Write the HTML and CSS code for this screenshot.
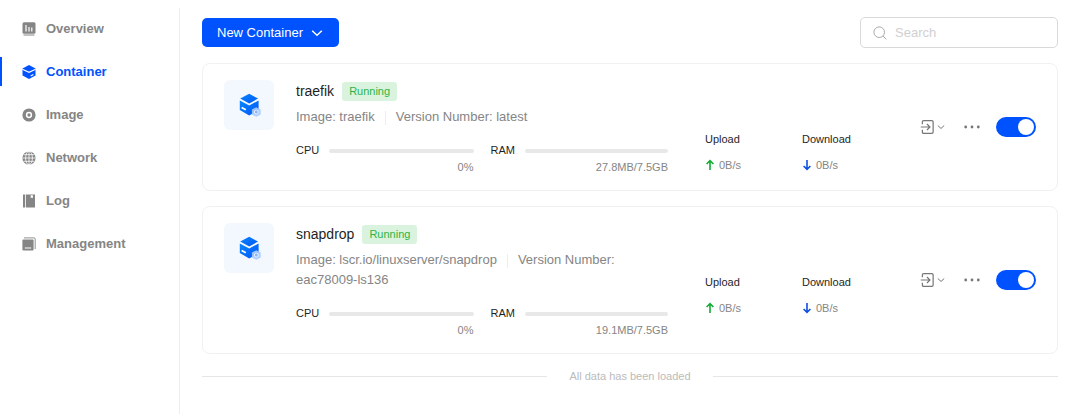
FILE: index.html
```html
<!DOCTYPE html>
<html lang="en">
<head>
<meta charset="utf-8">
<meta name="viewport" content="width=device-width, initial-scale=1">
<title>Containers</title>
<link rel="stylesheet" href="styles.css">
</head>
<body>
<svg class="defs" aria-hidden="true">
  <defs>
    <linearGradient id="boxFill" x1="0" y1="0" x2="1" y2="1"><stop offset="0" stop-color="#0a86ff"/><stop offset="1" stop-color="#0056f5"/></linearGradient>
    <symbol id="box" viewBox="-2 0 24 24">
      <path fill="url(#boxFill)" d="M10.2.8 19 5.6 10.2 10.6 1.2 5.6z"/>
      <path fill="url(#boxFill)" d="M.8 7.4 10.2 12.6 19.6 7.4V17l-9.4 5.4L.8 17z"/>
      <path stroke="#fff" stroke-width="1.7" d="m2.6 14.4 4.2 2.3"/>
      <path fill="#a9caff" fill-opacity=".9" d="m17.3 14.2 4.4 2.4v4.8l-4.4 2.4-4.4-2.4v-4.8z"/>
      <circle cx="17.3" cy="19" r="2" fill="#8bb6ff" stroke="#e8f1ff"/>
    </symbol>
    <symbol id="enter" viewBox="0 0 16 16">
      <path fill="none" stroke="#777" stroke-width="1.3" d="M2.5 5V2.6Q2.5 1.2 3.9 1.2h8.7Q14 1.2 14 2.6v10.8q0 1.4-1.4 1.4H3.9q-1.4 0-1.4-1.4V11M.8 8h9.6M7.4 4.8 10.6 8l-3.2 3.2"/>
    </symbol>
    <symbol id="chevron" viewBox="0 0 12 12">
      <path fill="none" stroke="currentColor" stroke-width="1.5" d="m1.2 3.8 4.8 4.4 4.8-4.4"/>
    </symbol>
    <symbol id="arrow" viewBox="0 0 10 12">
      <path fill="none" stroke="currentColor" stroke-width="1.6" d="M5 11V1.8M1.6 5 5 1.6 8.4 5"/>
    </symbol>
  </defs>
</svg>
<div class="app">
  <nav class="sidebar" aria-label="Main">
    <a class="nav-item" href="#overview"><svg class="nav-icon" viewBox="0 0 14 14"><rect x=".5" y=".2" width="13" height="11.6" rx="1.5" fill="currentColor"/><path stroke="#fff" stroke-width="1.2" d="M4 3v6.5M7 5v4.5M9.8 5.5v4"/><path stroke="currentColor" stroke-width="1" d="M1.5 13h11"/></svg>Overview</a>
    <a class="nav-item active" href="#container" aria-current="page"><svg class="nav-icon" viewBox="0 0 14 14"><path fill="currentColor" d="M7 0 13.5 3.5v7L7 14 .5 10.5v-7z"/><path fill="none" stroke="#fff" stroke-width="1.1" d="M.4 4.2 7 7.3l6.6-3.1M8.7 11l2.7-1.5"/></svg>Container</a>
    <a class="nav-item" href="#image"><svg class="nav-icon" viewBox="0 0 14 14"><circle cx="7" cy="7" r="6.6" fill="currentColor"/><circle cx="7" cy="7" r="2.4" fill="none" stroke="#fff" stroke-width="1.5"/></svg>Image</a>
    <a class="nav-item" href="#network"><svg class="nav-icon" viewBox="0 0 14 14"><circle cx="7" cy="7" r="6.6" fill="currentColor"/><path fill="none" stroke="#fff" stroke-width=".8" d="M7 0v14M.4 7h13.2M1.5 3.7h11M1.5 10.3h11"/><ellipse cx="7" cy="7" rx="3.4" ry="6.8" fill="none" stroke="#fff" stroke-width=".8"/></svg>Network</a>
    <a class="nav-item" href="#log"><svg class="nav-icon" viewBox="0 0 14 14"><path fill="currentColor" d="M1 .4h2v13.2H1zM3.8.4H13v13.2H3.8z"/><path fill="#fff" d="M8.7 1.2h2.2v3l-1.1-.8-1.1.8z"/></svg>Log</a>
    <a class="nav-item" href="#management"><svg class="nav-icon" viewBox="0 0 14 14"><rect x=".4" y="2.4" width="11.2" height="11.2" rx="1" fill="currentColor"/><path fill="none" stroke="currentColor" stroke-width=".9" d="M2 .9h10q1.2 0 1.2 1.2v10"/><path stroke="#fff" d="M2.8 11h6.4"/></svg>Management</a>
  </nav>
  <main class="main">
    <header class="toolbar">
      <button class="new-button" type="button" aria-haspopup="menu">New Container<svg class="new-chevron"><use href="#chevron"/></svg></button>
      <label class="search">
        <svg class="search-icon" viewBox="0 0 14 14"><circle cx="6.2" cy="6.2" r="5.3" fill="none" stroke="#aaa"/><path stroke="#aaa" d="m10 10 3.4 3.4"/></svg>
        <input class="search-input" type="search" placeholder="Search" aria-label="Search">
      </label>
    </header>
    <article class="card">
      <div class="thumb"><svg class="thumb-icon"><use href="#box"/></svg></div>
      <div class="info">
        <div class="title-row"><h2 class="name">traefik</h2><span class="badge">Running</span></div>
        <p class="meta">Image: traefik<span class="divider"></span>Version Number: latest</p>
        <div class="usage">
          <div class="gauge"><label class="gauge-label" for="cpu1">CPU</label><progress class="bar" id="cpu1" value="0" max="100"></progress><span class="gauge-value">0%</span></div>
          <div class="gauge"><label class="gauge-label" for="ram1">RAM</label><progress class="bar" id="ram1" value="0" max="100"></progress><span class="gauge-value">27.8MB/7.5GB</span></div>
        </div>
      </div>
      <dl class="traffic">
        <div class="rate"><dt>Upload</dt><dd><svg class="arrow up"><use href="#arrow"/></svg>0B/s</dd></div>
        <div class="rate"><dt>Download</dt><dd><svg class="arrow down"><use href="#arrow"/></svg>0B/s</dd></div>
      </dl>
      <div class="actions">
        <button class="icon-button open" type="button" aria-label="Open"><svg class="enter-icon"><use href="#enter"/></svg><svg class="small-chevron"><use href="#chevron"/></svg></button>
        <button class="icon-button" type="button" aria-label="More"><svg class="dots" viewBox="0 0 16 4"><g fill="#777"><circle cx="1.7" cy="2" r="1.4"/><circle cx="8" cy="2" r="1.4"/><circle cx="14.3" cy="2" r="1.4"/></g></svg></button>
        <input class="switch" type="checkbox" role="switch" aria-label="traefik power" checked>
      </div>
    </article>
    <article class="card">
      <div class="thumb"><svg class="thumb-icon"><use href="#box"/></svg></div>
      <div class="info">
        <div class="title-row"><h2 class="name">snapdrop</h2><span class="badge">Running</span></div>
        <p class="meta">Image: lscr.io/linuxserver/snapdrop<span class="divider"></span>Version Number: <span class="version">eac78009-ls136</span></p>
        <div class="usage">
          <div class="gauge"><label class="gauge-label" for="cpu2">CPU</label><progress class="bar" id="cpu2" value="0" max="100"></progress><span class="gauge-value">0%</span></div>
          <div class="gauge"><label class="gauge-label" for="ram2">RAM</label><progress class="bar" id="ram2" value="0" max="100"></progress><span class="gauge-value">19.1MB/7.5GB</span></div>
        </div>
      </div>
      <dl class="traffic">
        <div class="rate"><dt>Upload</dt><dd><svg class="arrow up"><use href="#arrow"/></svg>0B/s</dd></div>
        <div class="rate"><dt>Download</dt><dd><svg class="arrow down"><use href="#arrow"/></svg>0B/s</dd></div>
      </dl>
      <div class="actions">
        <button class="icon-button open" type="button" aria-label="Open"><svg class="enter-icon"><use href="#enter"/></svg><svg class="small-chevron"><use href="#chevron"/></svg></button>
        <button class="icon-button" type="button" aria-label="More"><svg class="dots" viewBox="0 0 16 4"><g fill="#777"><circle cx="1.7" cy="2" r="1.4"/><circle cx="8" cy="2" r="1.4"/><circle cx="14.3" cy="2" r="1.4"/></g></svg></button>
        <input class="switch" type="checkbox" role="switch" aria-label="snapdrop power" checked>
      </div>
    </article>
    <p class="end">All data has been loaded</p>
  </main>
</div>
</body>
</html>
```

FILE: styles.css
```css
* { box-sizing: border-box; }
body {
  margin: 0;
  background: #fff;
  color: #1f1f1f;
  font: 13px/20px "Liberation Sans", Arial, sans-serif;
}
.defs { position: absolute; width: 0; height: 0; }
svg { display: block; flex: none; }
button, input { font: inherit; }
.app { display: flex; min-height: 100vh; padding-top: 8px; }
.sidebar {
  flex: none;
  display: flex;
  flex-direction: column;
  gap: 14px;
  width: 180px;
  padding-top: 6px;
  border-right: 1px solid #eee;
}
.nav-item {
  display: flex;
  align-items: center;
  gap: 10px;
  height: 29px;
  padding-left: 20px;
  border-left: 2px solid transparent;
  color: #858585;
  font-weight: bold;
  text-decoration: none;
}
.nav-item.active { border-color: #0052ff; color: #0052ff; }
.nav-icon { width: 14px; height: 14px; }
.main {
  flex: 1;
  min-width: 0;
  display: flex;
  flex-direction: column;
  gap: 15px;
  padding: 9px 22px 0;
}
.toolbar { display: flex; align-items: center; justify-content: space-between; }
.new-button {
  display: flex;
  align-items: center;
  gap: 8px;
  height: 29px;
  padding: 0 16px 0 15px;
  border: 0;
  border-radius: 5px;
  background: #0052ff;
  color: #fff;
}
.new-chevron { width: 12px; height: 12px; }
.search {
  display: flex;
  align-items: center;
  gap: 8px;
  width: 198px;
  height: 31px;
  padding: 0 12px;
  border: 1px solid #d9d9d9;
  border-radius: 5px;
}
.search-icon { width: 14px; height: 14px; }
.search-input { flex: 1; min-width: 0; padding: 0; border: 0; outline: 0; background: none; }
.search-input::placeholder { color: #d0d0d0; }
.card {
  display: flex;
  padding: 16px 21px;
  border: 1px solid #f1f1f1;
  border-radius: 8px;
}
.thumb {
  flex: none;
  display: grid;
  place-items: center;
  width: 50px;
  height: 50px;
  margin-right: 22px;
  border-radius: 6px;
  background: #f3f8ff;
}
.thumb-icon { width: 24px; height: 24px; }
.info { flex: 1; min-width: 0; }
.title-row { display: flex; align-items: center; gap: 8px; height: 22px; }
.name { margin: 0; font-size: 14px; font-weight: normal; }
.badge {
  padding: 0 7px;
  border-radius: 3px;
  background: #d9f3de;
  color: #2fb344;
  font-size: 11px;
  line-height: 19px;
}
.meta { margin: 5px 0 14px; color: #858585; }
.divider {
  display: inline-block;
  width: 1px;
  height: 14px;
  margin: 0 10px;
  background: #eee;
  vertical-align: middle;
}
.version { white-space: nowrap; }
.usage { display: grid; grid-template-columns: 1fr 1fr; gap: 17px; }
.gauge {
  display: grid;
  grid-template-columns: auto 1fr;
  align-items: center;
  column-gap: 10px;
  font-size: 11px;
}
.gauge-label { line-height: 19px; }
.gauge-value { grid-column: 1 / -1; color: #858585; line-height: 14px; text-align: right; }
.bar {
  appearance: none;
  display: block;
  width: 100%;
  height: 4px;
  border: 0;
  border-radius: 2px;
  background: #e8e8e8;
  overflow: hidden;
}
.bar::-webkit-progress-bar { background: #e8e8e8; }
.bar::-webkit-progress-value { background: #0052ff; }
.traffic {
  flex: none;
  display: grid;
  grid-template-columns: 97px 118px;
  align-content: start;
  margin: 52px 0 0 37px;
  font-size: 11px;
  line-height: 14px;
}
.rate dd { display: flex; align-items: center; gap: 4px; margin: 12px 0 0; color: #858585; }
.arrow { width: 10px; height: 12px; }
.up { color: #16ac35; }
.down { color: #0d50df; transform: rotate(180deg); }
.actions { flex: none; display: flex; align-items: center; gap: 16px; }
.icon-button {
  display: flex;
  align-items: center;
  height: 20px;
  padding: 0;
  border: 0;
  background: none;
  color: #777;
}
.open { gap: 2px; padding-right: 3px; }
.enter-icon { width: 15px; height: 16px; }
.small-chevron { width: 8px; height: 8px; }
.dots { width: 16px; height: 4px; }
.switch {
  appearance: none;
  display: flex;
  align-items: center;
  justify-content: flex-start;
  width: 40px;
  height: 20px;
  margin: 0;
  padding: 0 2px;
  border-radius: 10px;
  background: #bbb;
}
.switch::before { content: ""; width: 16px; height: 16px; border-radius: 50%; background: #fff; }
.switch:checked { justify-content: flex-end; background: #0052ff; }
.end {
  display: flex;
  align-items: center;
  gap: 22px;
  margin: 0;
  color: #bbb;
  font-size: 11px;
  line-height: 14px;
}
.end::before, .end::after { content: ""; flex: 1; height: 1px; background: #e6e6e6; }
```
